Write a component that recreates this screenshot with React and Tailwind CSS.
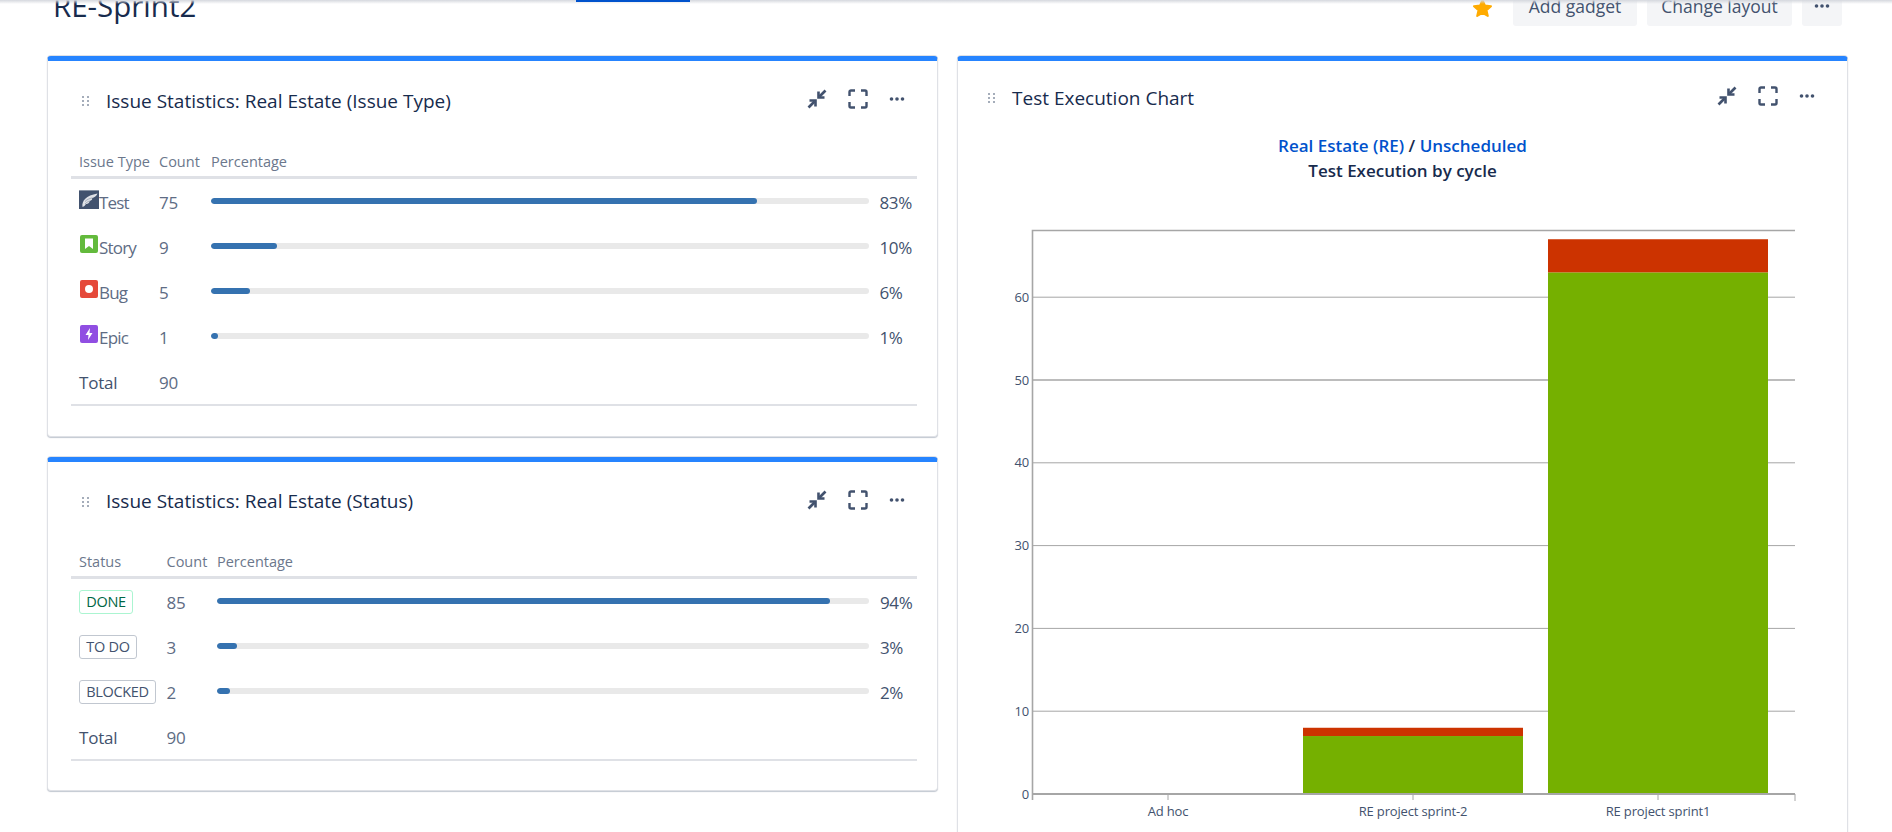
const font = { fontFamily: '"Open Sans", "Noto Sans", sans-serif' };

function Drag() {
  return (
    <svg width="8" height="12" viewBox="0 0 8 12" className="shrink-0" fill="#a5adba">
      {[1, 5, 9].map((y) => (
        <g key={y}>
          <rect x="0" y={y} width="2" height="2" />
          <rect x="5" y={y} width="2" height="2" />
        </g>
      ))}
    </svg>
  );
}

function Compress() {
  return (
    <svg width="20" height="20" viewBox="0 0 20 20" fill="none" stroke="#42526e" strokeWidth="2.6">
      <path d="M18.5 1.5 12.5 7.5" />
      <path d="M11.5 2.5V8.5H17.5" />
      <path d="M1.5 18.5 7.5 12.5" />
      <path d="M2.5 11.5H8.5V17.5" />
    </svg>
  );
}

function Expand() {
  return (
    <svg width="20" height="20" viewBox="0 0 20 20" fill="none" stroke="#42526e" strokeWidth="2.4">
      <path d="M7 1.5H3A1.5 1.5 0 0 0 1.5 3V7" />
      <path d="M13 1.5H17A1.5 1.5 0 0 1 18.5 3V7" />
      <path d="M1.5 13V17A1.5 1.5 0 0 0 3 18.5H7" />
      <path d="M18.5 13V17A1.5 1.5 0 0 1 17 18.5H13" />
    </svg>
  );
}

function More({ color = "#42526e" }) {
  return (
    <svg width="16" height="4" viewBox="0 0 16 4" fill={color}>
      <circle cx="2.5" cy="2" r="1.8" />
      <circle cx="8" cy="2" r="1.8" />
      <circle cx="13.5" cy="2" r="1.8" />
    </svg>
  );
}

function GadgetHeader({ title, h, iconShift, pl = "pl-[34px]" }) {
  return (
    <div className={`flex items-center ${pl} pr-[32px] ${h}`}>
      <Drag />
      <div className="ml-[16px] text-[19px] text-[#172b4d] font-medium whitespace-nowrap">{title}</div>
      <div className={`ml-auto flex items-center gap-[21px] ${iconShift}`}>
        <Compress />
        <Expand />
        <More />
      </div>
    </div>
  );
}

function TestIcon() {
  return (
    <svg width="20" height="19" viewBox="0 0 20 19">
      <rect width="20" height="19" fill="#42526e" />
      <rect width="20" height="1" fill="#8993a4" />
      <path d="M3.5 17C2.5 11 7 5.5 18.5 3.5 17.5 6 15.5 7.5 13 8 14 9 12.5 10.5 10.5 11 11 12.5 9 14 7 14 6 15.5 5 16.5 3.5 17Z" fill="#dfe1e6" />
      <path d="M6 11.5C8 9.5 10.5 8.5 13 8M6 14C7.5 12.5 9 11.5 10.5 11" fill="none" stroke="#8993a4" strokeWidth="0.7" />
    </svg>
  );
}
function StoryIcon() {
  return (
    <svg width="18" height="18" viewBox="0 0 18 18">
      <rect width="18" height="18" rx="2" fill="#63ba3c" />
      <path d="M5 3.5H13V14L9 11 5 14Z" fill="#fff" />
    </svg>
  );
}
function BugIcon() {
  return (
    <svg width="18" height="18" viewBox="0 0 18 18">
      <rect width="18" height="18" rx="2" fill="#e5493a" />
      <circle cx="9" cy="9" r="4" fill="#fff" />
    </svg>
  );
}
function EpicIcon() {
  return (
    <svg width="18" height="18" viewBox="0 0 18 18">
      <rect width="18" height="18" rx="2" fill="#904ee2" />
      <path d="M10 3 5.5 10H8.5L8 15 12.5 8H9.5Z" fill="#fff" />
    </svg>
  );
}

function Bar({ pct }) {
  return (
    <div className="h-[6px] rounded-full bg-[#e9e9e9] -translate-y-[2px] overflow-hidden">
      <div className="h-full rounded-full bg-[#3572b0]" style={{ width: pct }} />
    </div>
  );
}

function Badge({ children, green, w }) {
  return (
    <span
      className={`inline-flex items-center justify-center h-[24px] rounded-[3px] border text-[14.5px] tracking-[-0.3px] font-medium -translate-y-[1px] whitespace-nowrap ${w} ${
        green ? "border-[#abf5d1] text-[#006644]" : "border-[#c1c7d0] text-[#42526e]"
      }`}
    >
      {children}
    </span>
  );
}

function StatTable({ cols, head, rows, total, pb }) {
  return (
    <div className={`ml-[23px] mr-[20px] ${pb}`}>
      <div className={`grid ${cols} px-[8px] items-end pb-[5px] text-[14.5px] text-[#6b778c] font-medium leading-[18px] h-[35px]`}>
        <div>{head}</div>
        <div>Count</div>
        <div>Percentage</div>
      </div>
      <div className="h-[3px] bg-[#dfe1e6] mb-[1.5px]" />
      {rows.map((r) => (
        <div key={r.count + r.pct} className={`grid ${cols} px-[8px] items-center h-[45px] text-[17px] text-[#5e6c84]`}>
          <div className="flex items-center tracking-[-0.8px]">{r.label}</div>
          <div className="tracking-[-0.2px]">{r.count}</div>
          <Bar pct={r.fill} />
          <div className="pl-[11px] text-[#42526e] tracking-[-0.4px]">{r.pct}</div>
        </div>
      ))}
      <div className={`grid ${cols} px-[8px] items-center h-[43.5px] text-[17px] text-[#5e6c84]`}>
        <div className="text-[#42526e] tracking-[-0.2px]">Total</div>
        <div className="tracking-[-0.2px]">{total}</div>
      </div>
      <div className="h-[2px] bg-[#dfe1e6]" />
    </div>
  );
}

function Issue({ icon, text }) {
  return (
    <>
      <span className="w-[20px] flex justify-center -translate-y-[4px] shrink-0">{icon}</span>
      <span>{text}</span>
    </>
  );
}

function Card({ children, className = "" }) {
  return (
    <div className={`rounded-[4px] border-x border-b border-[#dfe1e6] border-t-[5px] border-t-[#2684ff] shadow-[0_1px_1px_rgba(9,30,66,0.25),0_-1px_0_#dfe1e6] bg-white ${className}`}>
      {children}
    </div>
  );
}

function Chart() {
  const grid = [10, 20, 30, 40, 50, 60];
  const y = (v) => 794 - v * 8.28;
  const labelStyle = { fontFamily: '"Open Sans", sans-serif', fontSize: 13, letterSpacing: "-0.15px", fill: "#42526e" };
  return (
    <svg viewBox="958 190 888 640" width="888" height="640" className="block">
      {grid.map((v) => (
        <line key={v} x1="1032" x2="1795" y1={y(v)} y2={y(v)} stroke="#a6a6a6" strokeWidth={v === 50 ? 1.4 : 1} />
      ))}
      <rect x="1303" y={y(7)} width="220" height={y(0) - y(7)} fill="#75b000" />
      <rect x="1303" y={y(8)} width="220" height={y(7) - y(8)} fill="#cc3300" />
      <rect x="1548" y={y(63)} width="220" height={y(0) - y(63)} fill="#75b000" />
      <rect x="1548" y={y(67)} width="220" height={y(63) - y(67)} fill="#cc3300" />
      <path d="M1795 230.5H1032.5V800" fill="none" stroke="#a6a6a6" strokeWidth="1.6" />
      <line x1="1032" x2="1795" y1="794" y2="794" stroke="#a6a6a6" strokeWidth="1.8" />
      {[1168, 1413, 1658, 1795].map((x) => (
        <line key={x} x1={x} x2={x} y1="794" y2={x === 1795 ? 801 : 800} stroke="#a6a6a6" strokeWidth="1" />
      ))}
      {[0, 10, 20, 30, 40, 50, 60].map((v) => (
        <text key={v} x="1029" y={y(v) + 4.5} textAnchor="end" style={labelStyle}>{v}</text>
      ))}
      <text x="1168" y="815.5" textAnchor="middle" style={labelStyle}>Ad hoc</text>
      <text x="1413" y="815.5" textAnchor="middle" style={labelStyle}>RE project sprint-2</text>
      <text x="1658" y="815.5" textAnchor="middle" style={labelStyle}>RE project sprint1</text>
    </svg>
  );
}

export default function App() {
  const typeRows = [
    { label: <Issue icon={<TestIcon />} text="Test" />, count: 75, fill: "83%", pct: "83%" },
    { label: <Issue icon={<StoryIcon />} text="Story" />, count: 9, fill: "10%", pct: "10%" },
    { label: <Issue icon={<BugIcon />} text="Bug" />, count: 5, fill: "6%", pct: "6%" },
    { label: <Issue icon={<EpicIcon />} text="Epic" />, count: 1, fill: "1%", pct: "1%" },
  ];
  const statusRows = [
    { label: <Badge green w="w-[54px]">DONE</Badge>, count: 85, fill: "94%", pct: "94%" },
    { label: <Badge w="w-[58px]">TO DO</Badge>, count: 3, fill: "3%", pct: "3%" },
    { label: <Badge w="w-[77px]">BLOCKED</Badge>, count: 2, fill: "2%", pct: "2%" },
  ];
  return (
    <div className="relative h-[832px] overflow-hidden bg-white" style={font}>
      <div className="flex items-center justify-between h-[40px] -mt-[14px] pl-[53px] pr-[50px]">
        <div className="text-[29.5px] leading-[40px] text-[#172b4d] font-medium">RE-Sprint2</div>
        <div className="flex items-center">
          <svg width="21" height="20" viewBox="0 0 21 20" className="mr-[20px] mt-[4px]">
            <path d="M10.5 2 13 7.6 19 8.2 14.5 12.2 15.8 18 10.5 15 5.2 18 6.5 12.2 2 8.2 8 7.6Z" fill="#ffab00" stroke="#ffab00" strokeWidth="2" strokeLinejoin="round" />
          </svg>
          <div className="flex items-center justify-center w-[124px] h-[40px] rounded-[3px] bg-[#f4f5f7] text-[17.5px] text-[#42526e] font-medium">Add gadget</div>
          <div className="flex items-center justify-center w-[145px] h-[40px] ml-[10px] rounded-[3px] bg-[#f4f5f7] text-[17.5px] text-[#42526e] font-medium">Change layout</div>
          <div className="flex items-center justify-center w-[40px] h-[40px] ml-[10px] rounded-[3px] bg-[#f4f5f7]">
            <More />
          </div>
        </div>
      </div>

      <div className="flex mt-[30px] pl-[47px] gap-[19px]">
        <div className="w-[891px] flex flex-col gap-[20px]">
          <Card>
            <GadgetHeader title="Issue Statistics: Real Estate (Issue Type)" h="h-[80px]" iconShift="-translate-y-[2px]" />
            <StatTable cols="grid-cols-[80px_52px_657.5px_1fr]" head="Issue Type" rows={typeRows} total={90} pb="pb-[30px]" />
          </Card>
          <Card>
            <GadgetHeader title="Issue Statistics: Real Estate (Status)" h="h-[79px]" iconShift="-translate-y-[2px]" />
            <StatTable cols="grid-cols-[87.5px_50.5px_652px_1fr]" head="Status" rows={statusRows} total={90} pb="pb-[29px]" />
          </Card>
        </div>
        <Card className="w-[891px] h-[800px]">
          <GadgetHeader title="Test Execution Chart" h="h-[74px]" iconShift="-translate-y-[2px]" pl="pl-[30px]" />
          <div className="-mt-[2px] text-center text-[17px] leading-[25px] font-semibold">
            <div>
              <span className="text-[#0052cc]">Real Estate (RE)</span>
              <span className="text-[#172b4d]"> / </span>
              <span className="text-[#0052cc]">Unscheduled</span>
            </div>
            <div className="text-[#172b4d]">Test Execution by cycle</div>
          </div>
          <div className="mt-[7px]">
            <Chart />
          </div>
        </Card>
      </div>

      <div className="absolute top-0 left-0 right-0 h-[4px] bg-gradient-to-b from-[#d5d8de] to-transparent" />
      <div className="absolute top-0 left-[576px] w-[114px] h-[1.5px] bg-[#0052cc]" />
    </div>
  );
}
